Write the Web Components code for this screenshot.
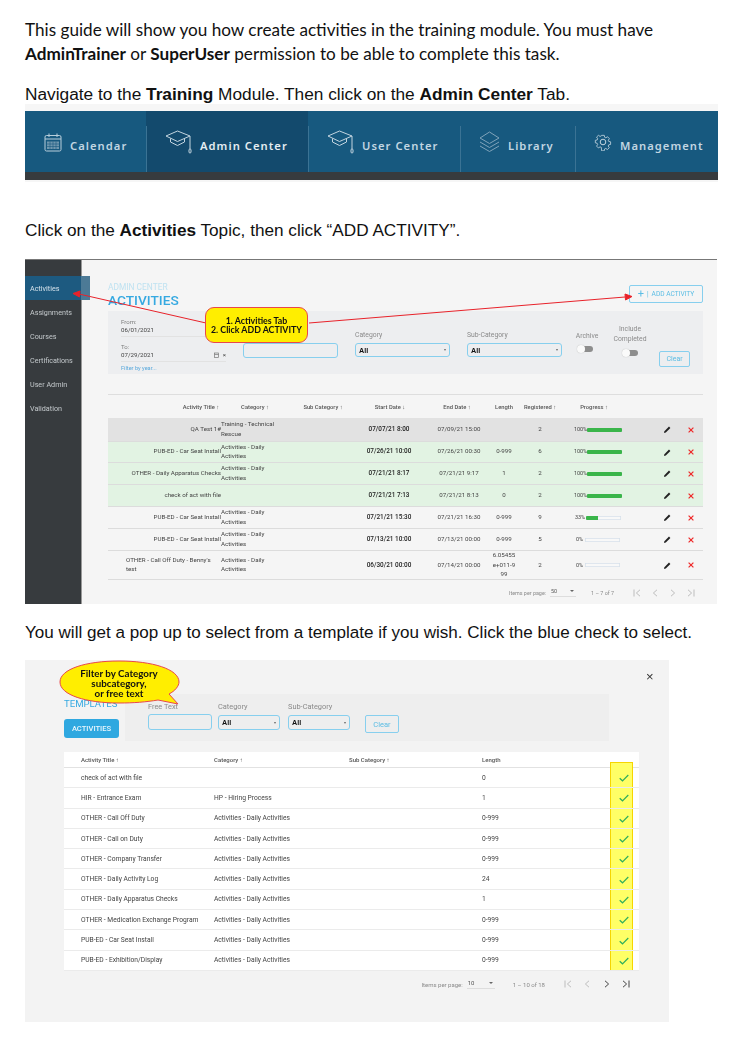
<!DOCTYPE html>
<html>
<head>
<meta charset="utf-8">
<title>Training guide</title>
<style>
    html, body { margin: 0; background: white; }
    body { font-family: "Liberation Sans", Arial, sans-serif; color: #111; }
    guide-page { width: 744px; }
</style>
</head>
<body>
<guide-page>
    <doc-para gap="18" line="24" font="Lato" size="17.15">This guide will show you how create activities in the training module. You must have<br><b>AdminTrainer</b> or <b>SuperUser</b> permission to be able to complete this task.</doc-para>
    <doc-para gap="19" line="19" size="17.3">Navigate to the <b>Training</b> Module. Then click on the <b>Admin Center</b> Tab.</doc-para>
    <nav-strip>
        <nav-tab icon="calendar" label="Calendar"></nav-tab>
        <nav-tab icon="cap" label="Admin Center" active></nav-tab>
        <nav-tab icon="cap" label="User Center"></nav-tab>
        <nav-tab icon="layers" label="Library"></nav-tab>
        <nav-tab icon="gear" label="Management"></nav-tab>
    </nav-strip>
    <doc-para gap="38" line="20" size="17.2">Click on the <b>Activities</b> Topic, then click “ADD ACTIVITY”.</doc-para>
    <activities-screen></activities-screen>
    <doc-para gap="19" line="20" size="17.07">You will get a pop up to select from a template if you wish. Click the blue check to select.</doc-para>
    <templates-screen></templates-screen>
</guide-page>

<script>
const BLUE_BORDER = "#87cfee";

const ICONS = {
    calendar: `<svg width="18" height="19" viewBox="0 0 18 19" fill="none" stroke="#b9cfdc" stroke-width="1"><rect x="1" y="2.5" width="16" height="15.5" rx="1.5"/><path d="M1 6h16M5 .5v3.5M13 .5v3.5"/><path d="M3 8.5h12v7.5H3z" fill="#6f97ae" stroke="none"/><path d="M3 11h12M3 13.5h12M6 8.5v7.5M9 8.5v7.5M12 8.5v7.5" stroke="#17597f" stroke-width=".6"/></svg>`,
    cap: `<svg width="27" height="24" viewBox="0 0 27 24" fill="none" stroke="#c3d5e0" stroke-width="1"><path d="M1 6 12.5 1 25 6 12.5 11.5z"/><path d="M5.5 8.5v3.5l7 3.5 7-3.5V8.5"/><path d="M25 6v13"/><rect x="24" y="19" width="2" height="4" rx="1"/></svg>`,
    layers: `<svg width="21" height="22" viewBox="0 0 21 22" fill="none" stroke="#7fa3ba" stroke-width="1"><path d="M10.5 1 20 7l-9.5 5.500L1 7z"/><path d="M1 11l9.5 5.500L20 11"/><path d="M1 15l9.5 5.500L20 15"/></svg>`,
    gear: `<svg width="18" height="18" viewBox="0 0 18 18" fill="none" stroke="#c3d5e0" stroke-width="1"><path d="M7.4 1h3.2l.4 2.3 1.5.7 2-1.3 2.2 2.3-1.3 1.9.6 1.5 2.2.4v3.2l-2.2.4-.7 1.5 1.3 2-2.2 2.2-2-1.3-1.5.6-.4 2.3H7.4L7 15.500l-1.500-.6-2 1.300L1.300 14l1.300-2-.7-1.500L-.2 10V7l2.200-.4.600-1.500-1.300-2L3.500 1l2 1.300L7 1.700z" transform="translate(1.500 1.500) scale(.83)"/><circle cx="9" cy="9" r="2.800"/></svg>`,
    calSmall: `<svg width="5" height="6" viewBox="0 0 5 6" fill="none" stroke="#777" stroke-width=".7"><rect x=".5" y="1" width="4" height="4.500"/><path d="M.5 2.500h4"/></svg>`,
    pencil: `<svg width="7" height="7" viewBox="0 0 7 7"><path d="M0 7l.4-1.800L5 .6 6.400 2 1.800 6.600z" fill="#222"/></svg>`,
    cross: `<svg width="6" height="6" viewBox="0 0 6 6" stroke="#ee2a2a" stroke-width="1.200"><path d="M.6.6l4.800 4.800M5.400.6.600 5.400"/></svg>`,
    tick: `<svg width="10" height="8" viewBox="0 0 10 8" fill="none" stroke="#2fae5c" stroke-width="1.200"><path d="M.7 4.200 3.500 6.800 9.300 1"/></svg>`,
    first: `<svg width="8" height="8" viewBox="0 0 8 8" fill="none" stroke="currentColor"><path d="M1 .5v7M7 .8 3.400 4 7 7.200"/></svg>`,
    prev: `<svg width="8" height="8" viewBox="0 0 8 8" fill="none" stroke="currentColor"><path d="M6 .8 2.400 4 6 7.200"/></svg>`,
    next: `<svg width="8" height="8" viewBox="0 0 8 8" fill="none" stroke="currentColor"><path d="M2 .8 5.600 4 2 7.200"/></svg>`,
    last: `<svg width="8" height="8" viewBox="0 0 8 8" fill="none" stroke="currentColor"><path d="M7 .5v7M1 .8 4.600 4 1 7.200"/></svg>`
};

class GuidePage extends HTMLElement {
    constructor() {
        super();
        this.attachShadow({ mode: "open" });
        this.shadowRoot.innerHTML = `
        <style>
            :host { display: flex; flex-direction: column; padding-left: 25px; box-sizing: border-box; }
        </style>
        <slot></slot>`;
    }
}

class DocPara extends HTMLElement {
    constructor() {
        super();
        this.attachShadow({ mode: "open" });
        const gap = this.getAttribute("gap") || 0;
        const line = this.getAttribute("line") || 20;
        const font = this.getAttribute("font") || "Liberation Sans";
        const size = this.getAttribute("size") || 16;
        this.shadowRoot.innerHTML = `
        <style>
            :host {
                display: block;
                margin-top: ${gap}px;
                font: ${size}px/${line}px "${font}", Arial, sans-serif;
                color: #111;
                white-space: nowrap;
            }
        </style>
        <slot></slot>`;
    }
}

class NavStrip extends HTMLElement {
    constructor() {
        super();
        this.attachShadow({ mode: "open" });
        this.shadowRoot.innerHTML = `
        <style>
            :host {
                display: block;
                width: 693px;
                background: #f6f6f6;
                padding: 7px 0 2px;
            }
            .tabs { display: grid; grid-template-columns: 121px 162px 152px 115px 1fr; height: 61px; background: #17597f; }
            .floor { height: 8px; background: #373b3e; }
        </style>
        <div class="tabs"><slot></slot></div>
        <div class="floor"></div>`;
    }
}

class NavTab extends HTMLElement {
    constructor() {
        super();
        this.attachShadow({ mode: "open" });
        const active = this.hasAttribute("active");
        this.shadowRoot.innerHTML = `
        <style>
            :host {
                display: flex;
                align-items: center;
                gap: 8px;
                padding: 8px 0 0 19px;
                position: relative;
                background: ${active ? "#134a6d" : "transparent"};
                color: ${active ? "#e4edf2" : "#c2d6e2"};
                font: 600 11.200px "Noto Sans", "Open Sans", sans-serif;
                letter-spacing: 1.050px;
                white-space: nowrap;
            }
            :host(:not(:first-child))::before {
                content: "";
                position: absolute;
                left: 0;
                top: 15px;
                bottom: 0;
                width: 1px;
                background: #3b7394;
            }
            svg { display: block; margin-top: -7px; }
        </style>
        ${ICONS[this.getAttribute("icon")]}
        <span>${this.getAttribute("label")}</span>`;
    }
}

class SideItem extends HTMLElement {
    constructor() {
        super();
        this.attachShadow({ mode: "open" });
        this.shadowRoot.innerHTML = `
        <style>
            :host {
                display: flex;
                align-items: center;
                height: 24px;
                padding: 1px 0 0 5px;
                box-sizing: border-box;
                color: #c4c9cc;
                font: 7.200px Roboto, sans-serif;
                position: relative;
            }
            :host([active]) { background: #1d5a80; color: #d5e2ea; }
            :host([active])::after {
                content: "";
                position: absolute;
                left: 100%;
                top: 0;
                bottom: 0;
                width: 9px;
                background: #4c7a96;
            }
        </style>
        <slot></slot>`;
    }
}

class FilterSelect extends HTMLElement {
    constructor() {
        super();
        this.attachShadow({ mode: "open" });
        const label = this.getAttribute("label");
        this.shadowRoot.innerHTML = `
        <style>
            :host { display: block; font-family: Roboto, sans-serif; }
            .label { color: #8a8a8a; font-size: var(--label-size, 6.800px); line-height: 8px; margin-bottom: 4px; }
            .box {
                display: flex;
                align-items: center;
                justify-content: space-between;
                box-sizing: border-box;
                height: var(--box-height, 14px);
                padding: 0 3px;
                border: 1px solid ${BLUE_BORDER};
                border-radius: 3px;
                font: bold 7.200px "Liberation Sans", sans-serif;
                color: #111;
            }
            i { border: 1.500px solid transparent; border-top: 2px solid #666; border-bottom: 0; }
        </style>
        ${label ? `<div class="label">${label}</div>` : ""}
        <div class="box"><span>All</span><i></i></div>`;
    }
}

class ToggleSwitch extends HTMLElement {
    constructor() {
        super();
        this.attachShadow({ mode: "open" });
        this.shadowRoot.innerHTML = `
        <style>
            :host { display: block; width: 16px; height: 8px; position: relative; }
            .track { position: absolute; left: 3px; right: 0; top: 1px; bottom: 1px; background: #8d8d8d; border-radius: 3px; }
            .knob { position: absolute; left: 0; top: 0; width: 8px; height: 8px; background: #fafafa; border-radius: 50%; box-shadow: 0 0 1px #aaa; }
        </style>
        <div class="track"></div><div class="knob"></div>`;
    }
}

class SoftButton extends HTMLElement {
    constructor() {
        super();
        this.attachShadow({ mode: "open" });
        this.shadowRoot.innerHTML = `
        <style>
            :host {
                display: flex;
                align-items: center;
                justify-content: center;
                box-sizing: border-box;
                border: 1px solid ${BLUE_BORDER};
                border-radius: 2px;
                color: #5bbde4;
                font: 7px Roboto, sans-serif;
                white-space: nowrap;
            }
        </style>
        <slot></slot>`;
    }
}

class ActRow extends HTMLElement {
    constructor() {
        super();
        this.attachShadow({ mode: "open" });
        const a = (n) => this.getAttribute(n) || "";
        const pct = Number(a("pct"));
        const pad = pct === 100 ? 18 : pct === 33 ? 19 : 20;
        const labelWidth = pct === 100 ? 13 : pct === 33 ? 11 : 9;
        const tones = { gray: "#e2e2e2", green: "#e2f3e3", plain: "transparent" };
        this.shadowRoot.innerHTML = `
        <style>
            :host {
                display: grid;
                grid-template-columns: 113px 123px 90px 50px 40px 32px 76px 20px 30px 18px 3px;
                align-items: center;
                height: ${a("h") || 22}px;
                box-sizing: border-box;
                border-bottom: 1px solid #dcdcdc;
                background: ${tones[a("tone") || "plain"]};
                font: 6.200px/9.500px Roboto, sans-serif;
                color: #444;
            }
            .title { text-align: right; }
            .title.left { text-align: left; padding-left: 18px; }
            .cat { width: 60px; }
            .c { text-align: center; }
            .start { font-weight: 500; color: #222; font-size: 6.400px; }
            .len { width: 26px; justify-self: center; word-break: break-all; }
            .prog { display: flex; align-items: center; padding-left: ${pad}px; font-size: 5.400px; }
            .prog span { width: ${labelWidth}px; }
            .bar { width: 35px; height: 4px; background: #f8f8f8; box-shadow: inset 0 0 0 .5px #c5d4e3; border-radius: 1px; overflow: hidden; }
            .fill { height: 100%; width: ${pct}%; background: #3ab54a; }
            svg { display: block; margin: auto; }
        </style>
        <div class="title ${this.hasAttribute("wrap") ? "left" : ""}">${a("name")}</div>
        <div class="cat">${a("cat")}</div>
        <div class="c start">${a("start")}</div>
        <div class="c">${a("end")}</div>
        <div class="c len">${a("len")}</div>
        <div class="c">${a("reg")}</div>
        <div class="prog"><span>${pct}%</span><div class="bar"><div class="fill"></div></div></div>
        <div></div>
        <div>${ICONS.pencil}</div>
        <div>${ICONS.cross}</div>`;
    }
}

class PagerBar extends HTMLElement {
    constructor() {
        super();
        this.attachShadow({ mode: "open" });
        const a = (n) => this.getAttribute(n) || "";
        this.shadowRoot.innerHTML = `
        <style>
            :host {
                display: flex;
                align-items: center;
                justify-content: flex-end;
                font: var(--pager-font, 5.400px) Roboto, sans-serif;
                color: #8a8a8a;
                white-space: nowrap;
            }
            .size {
                display: flex;
                justify-content: space-between;
                align-items: center;
                width: var(--size-width, 26px);
                margin-left: 4px;
                padding: 0 2px 2px 1px;
                box-sizing: border-box;
                border-bottom: 1px solid #ddd;
                color: #555;
            }
            i { border: 2px solid transparent; border-top: 2px solid #666; border-bottom: 0; }
            .range { margin: 0 var(--range-right, 18px) 0 var(--range-left, 15px); }
            .nav { display: grid; grid-auto-flow: column; grid-auto-columns: var(--nav-step, 18px); justify-items: center; }
            .off { color: #bdbdbd; }
            .on { color: #444; }
            svg { display: block; }
        </style>
        <span>Items per page:</span>
        <div class="size"><span>${a("size")}</span><i></i></div>
        <span class="range">${a("range")}</span>
        <div class="nav">
            <span class="off">${ICONS.first}</span><span class="off">${ICONS.prev}</span>
            <span class="${this.hasAttribute("more") ? "on" : "off"}">${ICONS.next}</span>
            <span class="${this.hasAttribute("more") ? "on" : "off"}">${ICONS.last}</span>
        </div>`;
    }
}

class ActivitiesScreen extends HTMLElement {
    constructor() {
        super();
        this.attachShadow({ mode: "open" });
        this.shadowRoot.innerHTML = `
        <style>
            :host {
                display: grid;
                grid-template-columns: 57px 1fr;
                width: 692px;
                height: 345px;
                margin-top: 19px;
                box-sizing: border-box;
                border-top: 1px solid #777;
                background: #f5f5f5;
                position: relative;
                font-family: Roboto, sans-serif;
                filter: blur(.3px);
            }
            .side { background: #373b3e; border-right: 1px solid #999; box-sizing: border-box; padding-top: 16px; }
            .main { padding: 0 14px 0 26px; min-width: 0; }
            .head { display: flex; justify-content: space-between; height: 51px; box-sizing: border-box; padding-top: 22px; }
            .crumb { color: #bfe2f1; font-size: 8.400px; line-height: 10px; }
            h1 { margin: 1px 0 0; color: #36a9e1; font: 500 13.700px/15px Roboto, sans-serif; }
            .add { width: 74px; height: 18px; margin-top: 3px; font-size: 6.600px; gap: 2px; }
            .add b { font: 400 11px/10px Roboto, sans-serif; }
            .add em { font-style: normal; margin: 0 1px; }
            .filters {
                display: grid;
                grid-template-columns: 122px 112px 112px 105px 44px 38px 44px;
                height: 63px;
                box-sizing: border-box;
                padding-left: 13px;
                background: #edeef0;
                color: #7c7c7c;
                font-size: 6px;
                position: relative;
            }
            .dates { line-height: 8px; padding-top: 7px; }
            .dates .val { color: #444; border-bottom: 1px solid #e2e2e2; padding-bottom: 2px; margin-bottom: 6px; display: flex; align-items: center; gap: 4px; width: 105px; height: 8px; font-size: 6.200px; }
            .dates .val.last { margin-bottom: 2px; }
            .dates .val span:first-child { margin-right: auto; }
            .dates a { color: #5aa9dc; font-size: 5.600px; }
            .free { width: 95px; height: 15px; margin-top: 32px; box-sizing: border-box; border: 1px solid ${BLUE_BORDER}; border-radius: 3px; }
            filter-select { width: 95px; margin-top: 20px; }
            .sw { display: flex; flex-direction: column; align-items: center; text-align: center; font-size: 6.800px; line-height: 9.500px; color: #8a8a8a; }
            .sw.one { padding: 21px 0 0 0; width: 30px; gap: 3px; }
            .sw.one toggle-switch { margin-left: -4px; }
            .sw.two { padding: 14px 0 0 0; gap: 5px; width: 40px; margin-left: -6px; }
            .clear { width: 31px; height: 16px; margin: 40px 0 0 5px; }
            .table { margin-top: 20px; border-top: 1px solid #dedede; }
            .thead {
                display: grid;
                grid-template-columns: 70px 46px 62px 74px 60px 74px 20px 52px 56px;
                height: 23px;
                align-items: center;
                justify-items: center;
                font: 500 5.800px Roboto, sans-serif;
                color: #555;
                white-space: nowrap;
            }
            pager-bar { height: 23px; padding: 2px 3px 0 0; box-sizing: border-box; --range-right: 14px; }
            .note {
                position: absolute;
                left: 180px;
                top: 47px;
                width: 103px;
                height: 36px;
                box-sizing: border-box;
                display: flex;
                align-items: center;
                justify-content: center;
                text-align: center;
                background: #ffee00;
                border: 1px solid #e8474c;
                border-radius: 9px;
                color: #111;
                font: bold 8.800px/9.500px Lato, sans-serif;
            }
            svg.arrows { position: absolute; left: 0; top: 0; pointer-events: none; }
        </style>
        <div class="side">
            <side-item active>Activities</side-item>
            <side-item>Assignments</side-item>
            <side-item>Courses</side-item>
            <side-item>Certifications</side-item>
            <side-item>User Admin</side-item>
            <side-item>Validation</side-item>
        </div>
        <div class="main">
            <div class="head">
                <div>
                    <div class="crumb">ADMIN CENTER</div>
                    <h1>ACTIVITIES</h1>
                </div>
                <soft-button class="add"><b>+</b><em>|</em>ADD ACTIVITY</soft-button>
            </div>
            <div class="filters">
                <div class="dates">
                    <div>From:</div>
                    <div class="val"><span>06/01/2021</span></div>
                    <div>To:</div>
                    <div class="val last"><span>07/29/2021</span>${ICONS.calSmall}<span>×</span></div>
                    <a>Filter by year...</a>
                </div>
                <div class="free"></div>
                <filter-select label="Category"></filter-select>
                <filter-select label="Sub-Category"></filter-select>
                <div class="sw one">Archive<toggle-switch></toggle-switch></div>
                <div class="sw two">Include Completed<toggle-switch></toggle-switch></div>
                <soft-button class="clear">Clear</soft-button>
            </div>
            <div class="table">
                <div class="thead">
                    <span></span><span>Activity Title ↑</span><span>Category ↑</span><span>Sub Category ↑</span>
                    <span>Start Date ↓</span><span>End Date ↑</span><span>Length</span><span>Registered ↑</span><span>Progress ↑</span>
                </div>
                <act-row tone="gray" h="24" name="QA Test 1#" cat="Training - Technical Rescue" start="07/07/21 8:00" end="07/09/21 15:00" reg="2" pct="100"></act-row>
                <act-row tone="green" h="21" name="PUB-ED - Car Seat Install" cat="Activities - Daily Activities" start="07/26/21 10:00" end="07/26/21 00:30" len="0-999" reg="6" pct="100"></act-row>
                <act-row tone="green" name="OTHER - Daily Apparatus Checks" cat="Activities - Daily Activities" start="07/21/21 8:17" end="07/21/21 9:17" len="1" reg="2" pct="100"></act-row>
                <act-row tone="green" name="check of act with file" start="07/21/21 7:13" end="07/21/21 8:13" len="0" reg="2" pct="100"></act-row>
                <act-row name="PUB-ED - Car Seat Install" cat="Activities - Daily Activities" start="07/21/21 15:30" end="07/21/21 16:30" len="0-999" reg="9" pct="33"></act-row>
                <act-row name="PUB-ED - Car Seat Install" cat="Activities - Daily Activities" start="07/13/21 10:00" end="07/13/21 00:00" len="0-999" reg="5" pct="0"></act-row>
                <act-row wrap h="29" name="OTHER - Call Off Duty - Benny's test" cat="Activities - Daily Activities" start="06/30/21 00:00" end="07/14/21 00:00" len="6.05455 e+011-9 99" reg="2" pct="0"></act-row>
                <pager-bar size="50" range="1 – 7 of 7"></pager-bar>
            </div>
        </div>
        <svg class="arrows" width="692" height="345" fill="none" stroke="#e8222a" stroke-width="1">
            <path d="M181 63 54 34"/><path d="M284 63 600 37"/>
            <path d="M48 33.500 55 31 54.500 37z" fill="#e8222a"/>
            <path d="M607 36.500 600 34 600.500 40z" fill="#e8222a"/>
        </svg>
        <div class="note">1. Activities Tab<br>2. Click ADD ACTIVITY</div>`;
    }
}

class TplRow extends HTMLElement {
    constructor() {
        super();
        this.attachShadow({ mode: "open" });
        const a = (n) => this.getAttribute(n) || "";
        this.shadowRoot.innerHTML = `
        <style>
            :host {
                display: grid;
                grid-template-columns: 133px 135px 133px 128px 30px;
                align-items: center;
                height: 20.300px;
                padding-left: 17px;
                box-sizing: border-box;
                border-bottom: 1px solid #ebebeb;
                font: 6.700px Roboto, sans-serif;
                color: #444;
                position: relative;
                z-index: 1;
            }
            svg { display: block; margin: 1px 0 0 9px; }
        </style>
        <div>${a("name")}</div><div>${a("cat")}</div><div></div><div>${a("len")}</div><div>${ICONS.tick}</div>`;
    }
}

class TemplatesScreen extends HTMLElement {
    constructor() {
        super();
        this.attachShadow({ mode: "open" });
        this.shadowRoot.innerHTML = `
        <style>
            :host {
                display: block;
                width: 644px;
                height: 362px;
                margin-top: 17px;
                box-sizing: border-box;
                padding: 34px 30px 0 39px;
                background: #f3f3f3;
                position: relative;
                font-family: Roboto, sans-serif;
                filter: blur(.3px);
            }
            .top { display: flex; height: 47px; }
            .left { width: 61px; padding-top: 4px; }
            .tpl { color: #36a9e1; font-size: 9.600px; line-height: 11px; }
            .pick {
                display: flex;
                align-items: center;
                justify-content: center;
                width: 55px;
                height: 19px;
                margin-top: 10px;
                background: #2fa8e0;
                border-radius: 3px;
                color: #e8f6fd;
                font: 500 7.600px Roboto, sans-serif;
            }
            .filters {
                display: grid;
                grid-template-columns: 70px 70px 77px 40px;
                width: 484px;
                box-sizing: border-box;
                padding-left: 23px;
                background: #eeeeee;
                color: #8a8a8a;
                font-size: 7.400px;
                --box-height: 15px;
                --label-size: 7.400px;
            }
            .free { width: 64px; margin-top: 9px; line-height: 8px; }
            .free div { box-sizing: border-box; width: 64px; height: 16px; margin-top: 3px; border: 1px solid ${BLUE_BORDER}; border-radius: 3px; }
            filter-select { width: 62px; margin-top: 9px; }
            .clear { width: 34px; height: 18px; margin-top: 21px; font-size: 7.500px; }
            .table { width: 575px; margin-top: 11px; background: white; position: relative; }
            .thead {
                display: grid;
                grid-template-columns: 133px 135px 133px 128px;
                align-items: center;
                height: 16px;
                padding-left: 17px;
                box-sizing: border-box;
                border-bottom: 1px solid #e2e2e2;
                font: 500 6px Roboto, sans-serif;
                color: #555;
            }
            .pick-col {
                position: absolute;
                left: 546px;
                top: 10px;
                bottom: 0;
                width: 23px;
                box-sizing: border-box;
                background: #ffff66;
                border: 1px solid #f6d500;
            }
            pager-bar {
                width: 575px;
                height: 27px;
                padding-right: 3px;
                box-sizing: border-box;
                --pager-font: 6px;
                --size-width: 28px;
                --range-left: 18px;
                --range-right: 13px;
                --nav-step: 19.500px;
            }
            .close { position: absolute; left: 621px; top: 11px; color: #333; font: 13px/12px "Liberation Sans", sans-serif; }
            .balloon { position: absolute; left: 34px; top: 0; width: 124px; height: 46px; }
            .balloon svg { position: absolute; left: 0; top: 0; }
            .balloon div {
                position: relative;
                width: 120px;
                padding-top: 8px;
                text-align: center;
                font: bold 9.800px/10px Lato, sans-serif;
                color: #111;
            }
        </style>
        <div class="top">
            <div class="left">
                <div class="tpl">TEMPLATES</div>
                <div class="pick">ACTIVITIES</div>
            </div>
            <div class="filters">
                <div class="free">Free Text<div></div></div>
                <filter-select label="Category"></filter-select>
                <filter-select label="Sub-Category"></filter-select>
                <soft-button class="clear">Clear</soft-button>
            </div>
        </div>
        <div class="table">
            <div class="thead"><span>Activity Title ↑</span><span>Category ↑</span><span>Sub Category ↑</span><span>Length</span></div>
            <div class="pick-col"></div>
            <tpl-row name="check of act with file" len="0"></tpl-row>
            <tpl-row name="HIR - Entrance Exam" cat="HP - Hiring Process" len="1"></tpl-row>
            <tpl-row name="OTHER - Call Off Duty" cat="Activities - Daily Activities" len="0-999"></tpl-row>
            <tpl-row name="OTHER - Call on Duty" cat="Activities - Daily Activities" len="0-999"></tpl-row>
            <tpl-row name="OTHER - Company Transfer" cat="Activities - Daily Activities" len="0-999"></tpl-row>
            <tpl-row name="OTHER - Daily Activity Log" cat="Activities - Daily Activities" len="24"></tpl-row>
            <tpl-row name="OTHER - Daily Apparatus Checks" cat="Activities - Daily Activities" len="1"></tpl-row>
            <tpl-row name="OTHER - Medication Exchange Program" cat="Activities - Daily Activities" len="0-999"></tpl-row>
            <tpl-row name="PUB-ED - Car Seat Install" cat="Activities - Daily Activities" len="0-999"></tpl-row>
            <tpl-row name="PUB-ED - Exhibition/Display" cat="Activities - Daily Activities" len="0-999"></tpl-row>
        </div>
        <pager-bar size="10" range="1 – 10 of 18" more></pager-bar>
        <div class="close">×</div>
        <div class="balloon">
            <svg width="124" height="46" viewBox="0 0 124 46"><path d="M60 1C27 1 1 9 1 22s26 21 59 21c15 0 27-1 39 -3l20 4-9-10c6-3 10-8 10-12C120 9 93 1 60 1z" fill="#ffee00" stroke="#e8474c" stroke-width="1"/></svg>
            <div>Filter by Category<br>subcategory,<br>or free text</div>
        </div>`;
    }
}

customElements.define("guide-page", GuidePage);
customElements.define("doc-para", DocPara);
customElements.define("nav-strip", NavStrip);
customElements.define("nav-tab", NavTab);
customElements.define("side-item", SideItem);
customElements.define("filter-select", FilterSelect);
customElements.define("toggle-switch", ToggleSwitch);
customElements.define("soft-button", SoftButton);
customElements.define("act-row", ActRow);
customElements.define("pager-bar", PagerBar);
customElements.define("tpl-row", TplRow);
customElements.define("activities-screen", ActivitiesScreen);
customElements.define("templates-screen", TemplatesScreen);
</script>
</body>
</html>
